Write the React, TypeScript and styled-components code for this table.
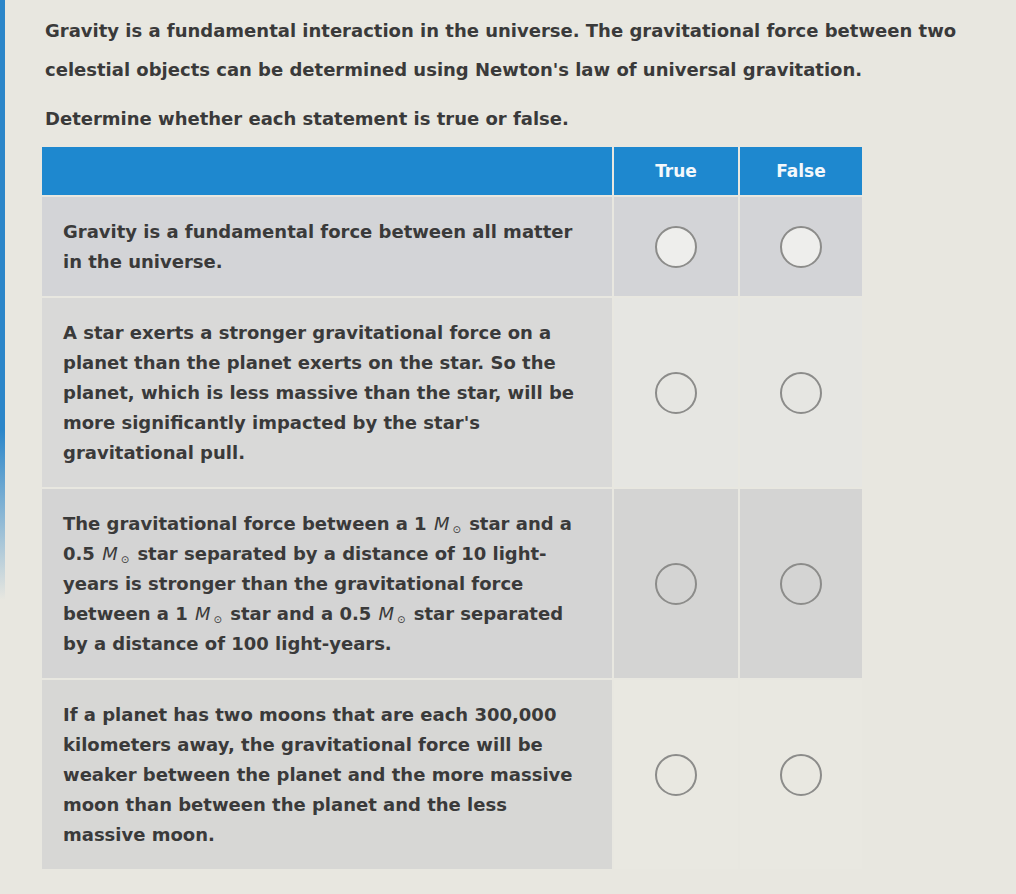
import styled, { createGlobalStyle } from "styled-components";

const GlobalStyle = createGlobalStyle`
    html, body {
        margin: 0;
        padding: 0;
    }
    body {
        background-color: #e8e7e0;
        background-image: linear-gradient(to bottom, #2b86c9 0, #2b86c9 430px, rgba(43, 134, 201, 0) 600px);
        background-size: 5px 100%;
        background-repeat: no-repeat;
        font-family: "DejaVu Sans", Verdana, sans-serif;
        color: #3a3a3a;
        min-height: 894px;
    }
`;

const Wrap = styled.div`
    padding: 11px 0 0 45px;
`;

const Intro = styled.p`
    margin: 0;
    font-size: 18px;
    font-weight: bold;
    line-height: 39px;
    width: 940px;
`;

const Prompt = styled.p`
    margin: 10px 0 0;
    font-size: 18px;
    font-weight: bold;
    line-height: 39px;
`;

const Table = styled.table`
    margin: 7px 0 0 -5px;
    border-collapse: separate;
    border-spacing: 2px;
    width: 824px;
    table-layout: fixed;
`;

const HeadCell = styled.th`
    background: #1e88cf;
    color: #f4f8fb;
    height: 48px;
    font-size: 17px;
    font-weight: bold;
    text-align: center;
    padding: 0;
`;

const rowColors: Record<number, { text: string; pick: string }> = {
    0: { text: "#d3d4d7", pick: "#d3d4d7" },
    1: { text: "#d9d9d8", pick: "#e6e6e2" },
    2: { text: "#d4d4d4", pick: "#d4d4d3" },
    3: { text: "#d7d7d5", pick: "#e9e8e1" },
};

const StatementCell = styled.td<{ $tone: number }>`
    background: ${(p) => rowColors[p.$tone].text};
    padding: 20px 23px 19px 21px;
    font-size: 18px;
    font-weight: bold;
    line-height: 30px;
    vertical-align: middle;
`;

const Mass = styled.span`
    font-style: italic;
    font-weight: normal;
    margin: 0 2px 0 1px;
`;

const SunMark = styled.span`
    display: inline-block;
    font-style: normal;
    font-size: 10px;
    line-height: 10px;
    vertical-align: -3px;
    margin-left: 3px;
`;

const PickCell = styled.td<{ $tone: number }>`
    background: ${(p) => rowColors[p.$tone].pick};
    text-align: center;
    vertical-align: middle;
    padding: 0;
`;

const Radio = styled.span<{ $filled: boolean }>`
    display: inline-block;
    width: 38px;
    height: 38px;
    border-radius: 50%;
    border: 2px solid #8c8c8a;
    background: ${(p) => (p.$filled ? "#eeeeec" : "transparent")};
    vertical-align: middle;
`;

const Sun = () => (
    <>
        {" "}
        <Mass>
            M<SunMark>⊙</SunMark>
        </Mass>{" "}
    </>
);

const statements = [
    <>Gravity is a fundamental force between all matter in the universe.</>,
    <>
        A star exerts a stronger gravitational force on a planet than the planet exerts on the star. So the
        planet, which is less massive than the star, will be more significantly impacted by the star's
        gravitational pull.
    </>,
    <>
        The gravitational force between a 1<Sun />star and a 0.5<Sun />star separated by a distance of 10
        light-years is stronger than the gravitational force between a 1<Sun />star and a 0.5<Sun />star
        separated by a distance of 100 light-years.
    </>,
    <>
        If a planet has two moons that are each 300,000 kilometers away, the gravitational force will be weaker
        between the planet and the more massive moon than between the planet and the less massive moon.
    </>,
];

const App = () => {
    return (
        <>
            <GlobalStyle />
            <Wrap>
                <Intro>
                    Gravity is a fundamental interaction in the universe. The gravitational force between two
                    celestial objects can be determined using Newton's law of universal gravitation.
                </Intro>
                <Prompt>Determine whether each statement is true or false.</Prompt>
                <Table>
                    <colgroup>
                        <col style={{ width: 570 }} />
                        <col style={{ width: 124 }} />
                        <col style={{ width: 122 }} />
                    </colgroup>
                    <thead>
                        <tr>
                            <HeadCell></HeadCell>
                            <HeadCell>True</HeadCell>
                            <HeadCell>False</HeadCell>
                        </tr>
                    </thead>
                    <tbody>
                        {statements.map((text, index) => (
                            <tr key={index}>
                                <StatementCell $tone={index}>{text}</StatementCell>
                                <PickCell $tone={index}>
                                    <Radio $filled={index === 0} />
                                </PickCell>
                                <PickCell $tone={index}>
                                    <Radio $filled={index === 0} />
                                </PickCell>
                            </tr>
                        ))}
                    </tbody>
                </Table>
            </Wrap>
        </>
    );
};

export default App;
